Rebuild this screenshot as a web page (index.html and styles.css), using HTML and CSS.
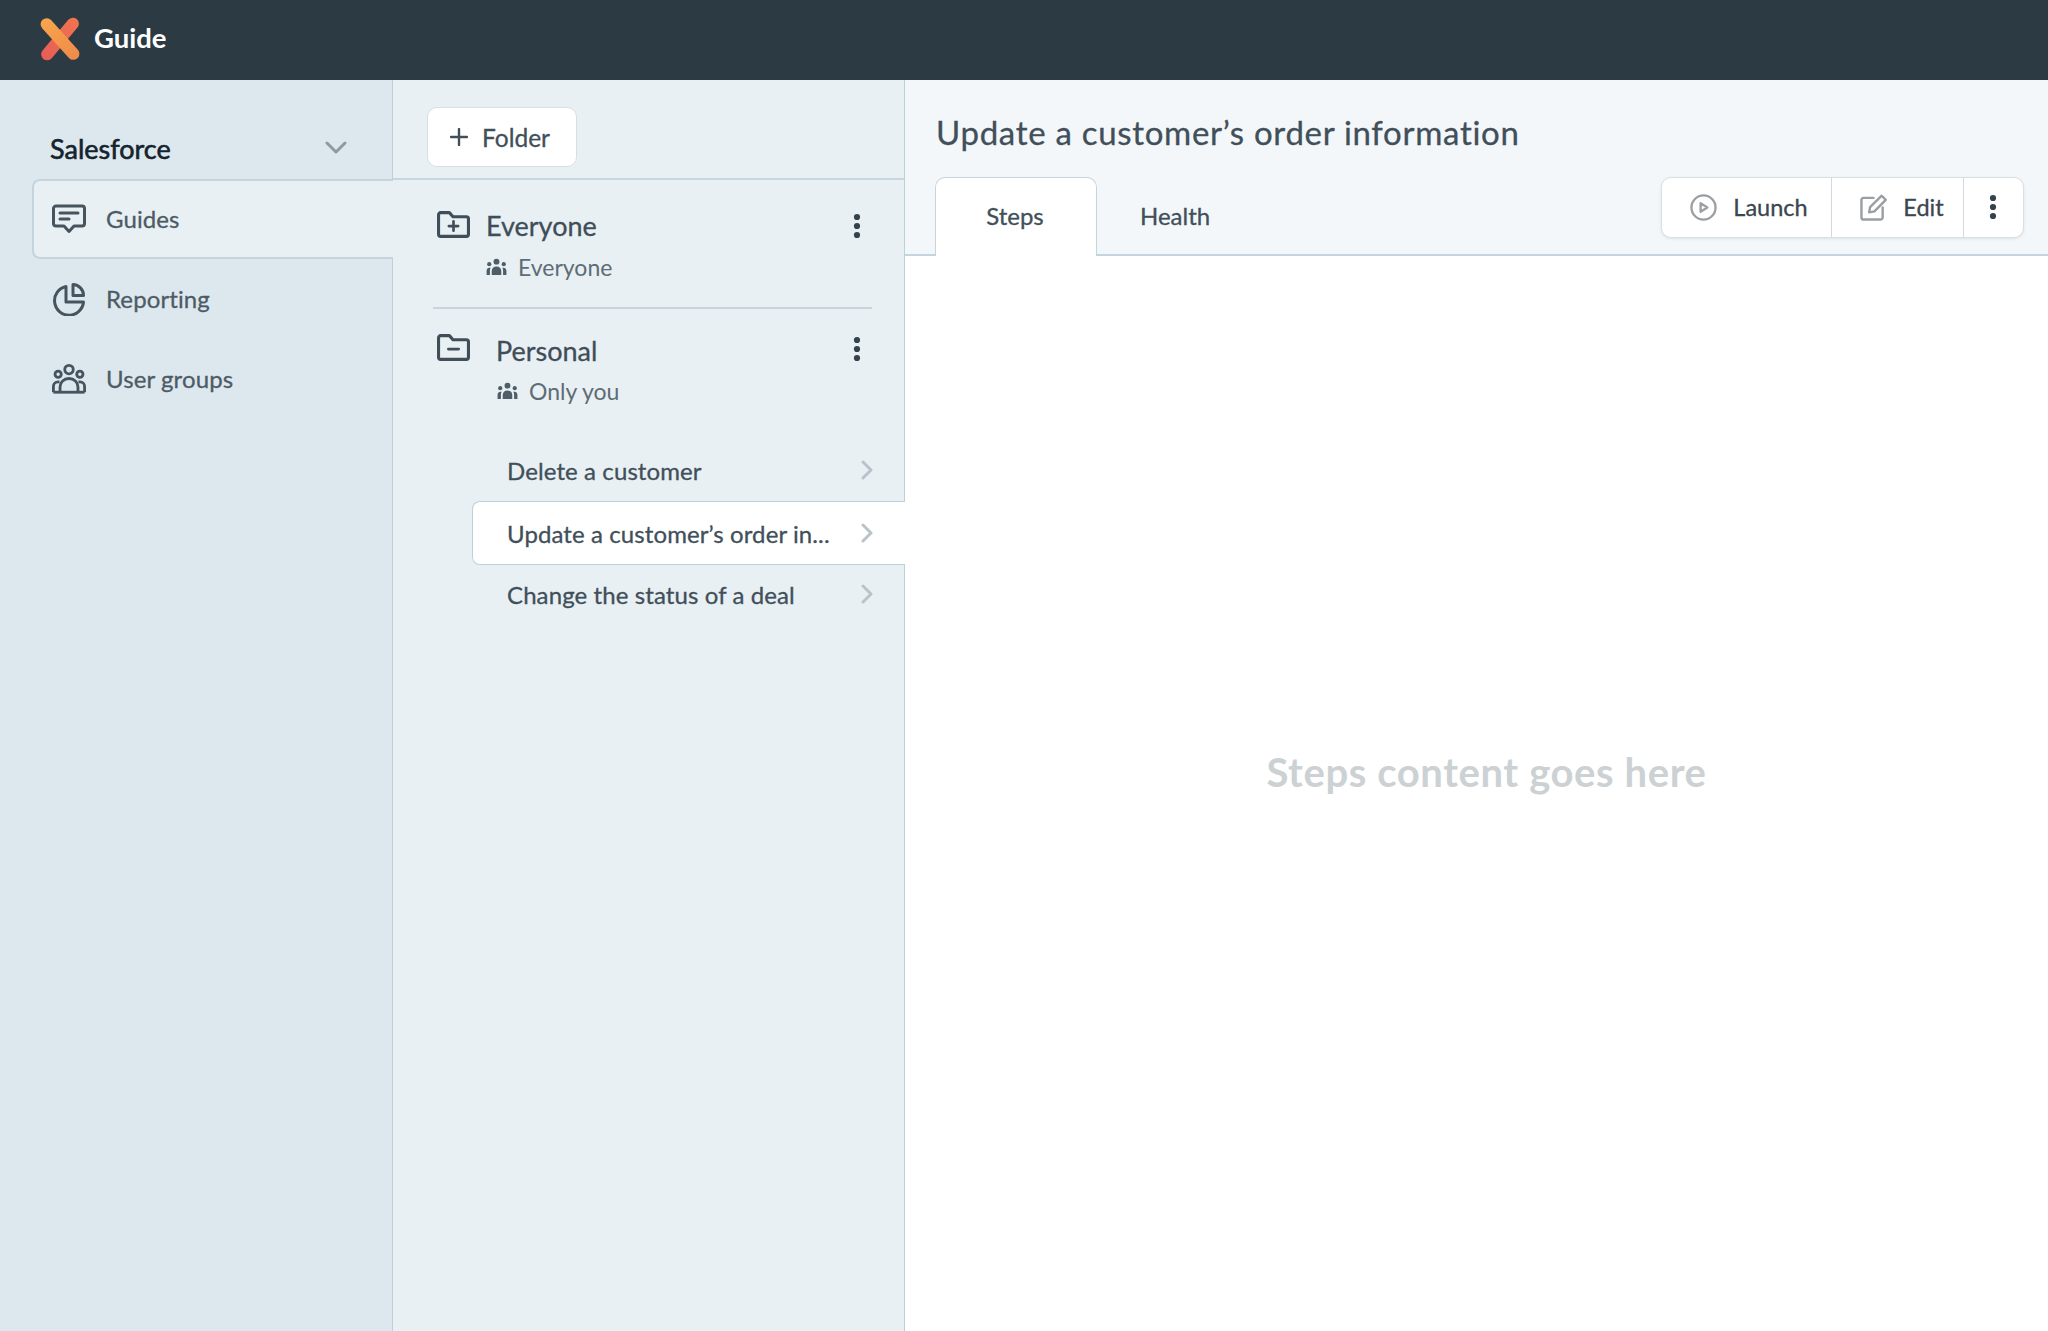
FILE: index.html
```html
<!DOCTYPE html>
<html lang="en">
<head>
<meta charset="utf-8">
<title>Guide</title>
<link rel="stylesheet" href="styles.css">
</head>
<body>
<svg class="defs" width="0" height="0" aria-hidden="true">
  <defs>
    <linearGradient id="lg-a" x1="0" y1="0" x2="1" y2="0"><stop offset="0" stop-color="#e85c58"/><stop offset="1" stop-color="#f0744f"/></linearGradient>
    <linearGradient id="lg-b" x1="0" y1="0" x2="1" y2="0"><stop offset="0" stop-color="#f7a64c"/><stop offset="1" stop-color="#ef8a4a"/></linearGradient>
    <symbol id="kebab" viewBox="0 0 8 26"><circle cx="4" cy="4" r="3.1"/><circle cx="4" cy="13" r="3.1"/><circle cx="4" cy="22" r="3.1"/></symbol>
    <symbol id="people" viewBox="0 0 22 18"><circle cx="11" cy="3.4" r="3.1"/><circle cx="3.4" cy="6" r="2.2"/><circle cx="18.6" cy="6" r="2.2"/><path d="M6 17.5v-4.2C6 10.2 8 8.4 11 8.4s5 1.8 5 4.9v4.2z"/><path d="M.6 17.5v-4.4c0-2 1-3.4 3-3.4h1.2c-.5 1-.7 2.2-.7 3.5v4.3zM21.4 17.5v-4.4c0-2-1-3.4-3-3.4h-1.2c.5 1 .7 2.2.7 3.5v4.3z"/></symbol>
    <symbol id="chev" viewBox="0 0 12 20"><path d="M2 2l8 8-8 8" fill="none" stroke="currentColor" stroke-width="3" stroke-linecap="round" stroke-linejoin="round"/></symbol>
  </defs>
</svg>
<div class="app">
  <header class="topbar">
    <svg class="logo" viewBox="0 0 42 46" aria-hidden="true">
      <rect x="-5" y="17" width="52" height="12" rx="6" transform="rotate(-50 21 23)" fill="url(#lg-a)"/>
      <rect x="-5" y="17" width="52" height="12" rx="6" transform="rotate(48 21 23)" fill="url(#lg-b)"/>
    </svg>
    <span class="brand">Guide</span>
  </header>
  <div class="main">
    <aside class="sidebar">
      <div class="workspace">
        <span class="workspace-name">Salesforce</span>
        <svg class="workspace-chev" viewBox="0 0 22 14" aria-hidden="true"><path d="M2 2l9 9 9-9" fill="none" stroke="currentColor" stroke-width="3" stroke-linecap="round" stroke-linejoin="round"/></svg>
      </div>
      <nav class="nav">
        <a class="nav-item active">
          <svg class="nav-icon" viewBox="0 0 34 30" aria-hidden="true"><path d="M4 2h26a2.500 2.500 0 0 1 2.500 2.500v15a2.500 2.500 0 0 1-2.500 2.500h-8l-5 5.500-5-5.500H4a2.500 2.500 0 0 1-2.500-2.500v-15A2.500 2.500 0 0 1 4 2z" fill="none" stroke="currentColor" stroke-width="3" stroke-linejoin="round"/><path d="M8 9h18M8 15h9" fill="none" stroke="currentColor" stroke-width="3" stroke-linecap="round"/></svg>
          <span class="nav-label">Guides</span>
        </a>
        <a class="nav-item">
          <svg class="nav-icon" viewBox="0 0 34 34" aria-hidden="true"><path d="M14 4.500A14.500 14.500 0 1 0 31.500 20H14z" fill="none" stroke="currentColor" stroke-width="3" stroke-linejoin="round"/><path d="M21 2.500a11 11 0 0 1 10.500 11H21z" fill="none" stroke="currentColor" stroke-width="3" stroke-linejoin="round"/></svg>
          <span class="nav-label">Reporting</span>
        </a>
        <a class="nav-item">
          <svg class="nav-icon" viewBox="0 0 36 32" aria-hidden="true"><g fill="none" stroke="currentColor" stroke-width="3" stroke-linejoin="round"><circle cx="18" cy="6" r="4.500"/><circle cx="6.500" cy="11" r="3.300"/><circle cx="29.500" cy="11" r="3.300"/><path d="M1.500 30v-6c0-3 2-5 5-5h1.500M34.500 30v-6c0-3-2-5-5-5H28"/><path d="M8.500 30v-5.500c0-5 4-9 9.500-9s9.500 4 9.500 9V30"/><path d="M1.500 30h33"/></g></svg>
          <span class="nav-label">User groups</span>
        </a>
      </nav>
    </aside>
    <section class="folders">
      <div class="folders-head">
        <button class="add-folder">
          <svg class="plus" viewBox="0 0 18 18" aria-hidden="true"><path d="M9 1v16M1 9h16" fill="none" stroke="currentColor" stroke-width="2.400" stroke-linecap="round"/></svg>
          <span>Folder</span>
        </button>
      </div>
      <div class="folder folder-first">
        <div class="folder-row">
          <svg class="folder-icon" viewBox="0 0 32 26" aria-hidden="true"><path d="M3.500 1.500h8.500l3.500 4h13a2 2 0 0 1 2 2v15a2 2 0 0 1-2 2h-25a2 2 0 0 1-2-2v-19a2 2 0 0 1 2-2z" fill="none" stroke="currentColor" stroke-width="3" stroke-linejoin="round"/><path d="M16 10v9M11.500 14.500h9" fill="none" stroke="currentColor" stroke-width="2.600" stroke-linecap="round"/></svg>
          <span class="folder-name">Everyone</span>
          <svg class="kebab" aria-hidden="true"><use href="#kebab"/></svg>
        </div>
        <div class="folder-sub"><svg class="people" aria-hidden="true"><use href="#people"/></svg><span>Everyone</span></div>
      </div>
      <div class="folder folder-second">
        <div class="folder-row">
          <svg class="folder-icon" viewBox="0 0 32 26" aria-hidden="true"><path d="M3.500 1.500h8.500l3.500 4h13a2 2 0 0 1 2 2v15a2 2 0 0 1-2 2h-25a2 2 0 0 1-2-2v-19a2 2 0 0 1 2-2z" fill="none" stroke="currentColor" stroke-width="3" stroke-linejoin="round"/><path d="M11 14.500h10" fill="none" stroke="currentColor" stroke-width="2.600" stroke-linecap="round"/></svg>
          <span class="folder-name">Personal</span>
          <svg class="kebab" aria-hidden="true"><use href="#kebab"/></svg>
        </div>
        <div class="folder-sub"><svg class="people" aria-hidden="true"><use href="#people"/></svg><span>Only you</span></div>
      </div>
      <ul class="guide-list">
        <li class="guide-item"><span>Delete a customer</span><svg class="chev" aria-hidden="true"><use href="#chev"/></svg></li>
        <li class="guide-item selected"><span>Update a customer’s order in...</span><svg class="chev" aria-hidden="true"><use href="#chev"/></svg></li>
        <li class="guide-item"><span>Change the status of a deal</span><svg class="chev" aria-hidden="true"><use href="#chev"/></svg></li>
      </ul>
    </section>
    <section class="detail">
      <div class="detail-head">
        <h1 class="title">Update a customer’s order information</h1>
        <div class="tabs-row">
          <div class="tabs">
            <div class="tab active">Steps</div>
            <div class="tab">Health</div>
          </div>
          <div class="actions">
            <button class="action action-launch">
              <svg class="action-icon" viewBox="0 0 28 28" aria-hidden="true"><circle cx="14" cy="14" r="12.500" fill="none" stroke="currentColor" stroke-width="2.400"/><path d="M11 9.500l7 4.500-7 4.500z" fill="none" stroke="currentColor" stroke-width="2.400" stroke-linejoin="round"/></svg>
              <span>Launch</span>
            </button>
            <button class="action action-edit">
              <svg class="action-icon" viewBox="0 0 28 28" aria-hidden="true"><path d="M14 4H4a2.500 2.500 0 0 0-2.500 2.500V24A2.500 2.500 0 0 0 4 26.500h17a2.500 2.500 0 0 0 2.500-2.500V14" fill="none" stroke="currentColor" stroke-width="2.500" stroke-linecap="round"/><path d="M9.500 19l1-5.500L22.500 1.800l4.200 4.200L15 18z" fill="none" stroke="currentColor" stroke-width="2.500" stroke-linejoin="round"/></svg>
              <span>Edit</span>
            </button>
            <button class="action action-more"><svg class="kebab" aria-hidden="true"><use href="#kebab"/></svg></button>
          </div>
        </div>
      </div>
      <div class="detail-body">Steps content goes here</div>
    </section>
  </div>
</div>
</body>
</html>
```
FILE: styles.css
```css
* { box-sizing: border-box; }
html, body { margin: 0; height: 100%; }
body { font-family: Lato, "Open Sans", "Liberation Sans", sans-serif; color: #414f5a; overflow: hidden; background: #fff; -webkit-text-stroke: 0.3px currentColor; }
.defs { position: absolute; }
.app { display: flex; flex-direction: column; height: 1331px; }

.topbar { height: 80px; background: #2b3a43; display: flex; align-items: center; padding-left: 39px; gap: 13px; flex: none; }
.logo { width: 42px; height: 46px; display: block; margin-top: -3px; }
.brand { color: #fff; font-size: 27.500px; font-weight: 700; margin-top: -5px; -webkit-text-stroke: 0; }

.main { flex: 1; display: grid; grid-template-columns: 393px 512px 1fr; min-height: 0; }

.sidebar { background: #dde8ee; border-right: 1px solid #bdd0dc; padding-top: 41px; }
.workspace { height: 58px; padding: 0 45px 0 50px; display: flex; justify-content: space-between; align-items: center; }
.workspace-name { font-size: 27px; font-weight: 400; -webkit-text-stroke: 0.6px currentColor; color: #15232d; margin-top: -4px; }
.workspace-chev { width: 22px; height: 14px; color: #8c9aa3; margin-top: -4px; }
.nav { display: flex; flex-direction: column; padding-left: 32px; }
.nav-item { height: 80px; display: flex; align-items: center; gap: 20px; padding-left: 20px; font-size: 24px; letter-spacing: 0.1px; color: #4d5b66; }
.nav-item.active { background: #e8f0f3; border: 2px solid #c4d4de; border-right: 0; border-radius: 8px 0 0 8px; margin-right: -1px; position: relative; padding-left: 18px; }
.nav-icon { width: 34px; height: 34px; color: #46545f; flex: none; }
.nav-label { margin-top: -2px; }

.folders { background: #e8f0f3; border-right: 1px solid #bdd0dc; }
.folders-head { height: 100px; padding: 27px 0 0 34px; border-bottom: 2px solid #c8d6df; }
.add-folder { width: 150px; height: 60px; background: #fff; border: 1.500px solid #d8dfe3; border-radius: 10px; display: flex; align-items: center; gap: 14px; padding: 0 0 0 22px; font: 400 24.500px Lato, sans-serif; color: #414f5a; }
.plus { width: 18px; height: 18px; color: #414f5a; }

.folder { margin: 0 32px 0 40px; }
.folder-first { padding-top: 31px; height: 129px; border-bottom: 2px solid #c8d5dc; }
.folder-second { padding-top: 25px; }
.folder-row { display: flex; align-items: center; height: 30px; }
.folder-icon { width: 33px; height: 27px; color: #3f4e59; flex: none; margin-left: 4px; margin-top: -4px; }
.folder-name { font-size: 27px; color: #3f4d58; margin-left: 16px; margin-top: -2px; }
.folder-second .folder-name { margin-left: 26px; margin-top: 2px; }
.kebab { width: 8px; height: 26px; fill: #33424d; margin-left: auto; margin-right: 11px; flex: none; }
.folder-sub { display: flex; align-items: center; gap: 11px; margin-top: 12px; margin-left: 53px; font-size: 23px; color: #5e6c76; -webkit-text-stroke: 0; }
.folder-second .folder-sub { margin-left: 64px; margin-top: 13px; }
.people { width: 21px; height: 18px; fill: #4f5d68; flex: none; }

.guide-list { list-style: none; margin: 34px 0 0 79px; padding: 0; }
.guide-item { height: 62px; display: flex; align-items: center; justify-content: space-between; padding: 0 31px 0 35px; font-size: 24px; letter-spacing: 0.1px; color: #414f5a; }
.guide-item.selected { height: 64px; background: #fff; border: 1.500px solid #bdd0dc; border-right: 0; border-radius: 8px 0 0 8px; margin: 0 -1px -2px 0; position: relative; padding-left: 34px; padding-right: 32px; }
.chev { width: 12px; height: 20px; color: #b8c3ca; flex: none; }

.detail { display: flex; flex-direction: column; min-width: 0; }
.detail-head { height: 176px; background: #f3f7f9; border-bottom: 2px solid #c5d5df; padding: 32px 24px 0 30px; display: flex; flex-direction: column; justify-content: space-between; }
.title { margin: 0 0 0 1px; font-size: 33px; font-weight: 400; letter-spacing: 0.7px; color: #414f5a; line-height: 40px; }
.tabs-row { display: flex; justify-content: space-between; align-items: flex-start; height: 79px; margin-bottom: -2px; }
.tabs { display: flex; align-items: stretch; height: 79px; }
.tab { font-size: 24px; color: #414f5a; display: flex; align-items: center; padding: 0 43px 3px; }
.tab.active { width: 162px; justify-content: center; padding: 0 2px 3px 0; background: #fff; border: 1.500px solid #c5d5df; border-bottom: 0; border-radius: 10px 10px 0 0; }
.actions { display: flex; width: 363px; height: 61px; background: #fff; border: 1.500px solid #d9dfe3; border-radius: 10px; box-shadow: 0 1px 3px rgba(60, 80, 90, .12); }
.action { background: none; border: 0; padding: 0 0 1px; display: flex; align-items: center; justify-content: center; gap: 16px; font: 400 23.500px Lato, sans-serif; color: #3a4650; }
.action-launch { width: 170px; border-right: 1.500px solid #d3d9dd; padding-left: 5px; }
.action-edit { width: 132px; border-right: 1.500px solid #d3d9dd; padding-left: 9px; }
.action-more { flex: 1; padding-right: 1px; }
.action-more .kebab { margin: 0; }
.action-icon { width: 27px; height: 27px; color: #9a9fa3; flex: none; }

.detail-body { flex: 1; display: flex; align-items: center; justify-content: center; font-size: 40px; font-weight: 700; -webkit-text-stroke: 0; color: #ccd1d4; letter-spacing: 0.6px; padding-bottom: 44px; padding-left: 20px; }
```
